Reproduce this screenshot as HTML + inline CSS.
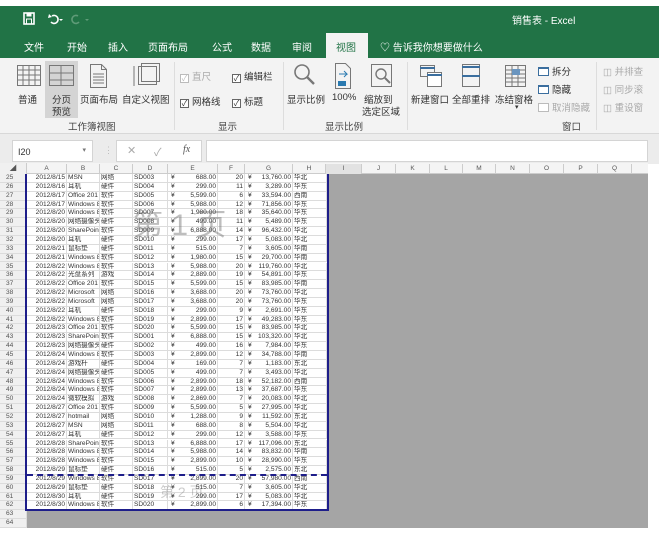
<!DOCTYPE html>
<html><head><meta charset="utf-8"><style>
*{margin:0;padding:0;box-sizing:border-box}
body{width:659px;height:533px;overflow:hidden;background:#fff;font-family:"Liberation Sans","Noto Sans CJK SC",sans-serif;position:relative}
.a{position:absolute;white-space:nowrap}
.t{color:#fff;font-size:10px}
.r{font-size:9.5px;color:#333}
.g{font-size:9.5px;color:#444}
.dis{color:#aaa}
.cb{display:inline-block;width:9px;height:9px;border:1px solid #666;background:#fff;vertical-align:-1px;margin-right:3px;font-size:8px;line-height:7px;text-align:center}
#grid .row{position:absolute;left:0;height:8.85px;width:328px;font-size:6.6px;color:#333;line-height:8.6px}
#grid .row span{position:absolute;top:0;height:8.85px;border-right:1px solid #dcdcdc;border-bottom:1px solid #dcdcdc;overflow:hidden;padding:0 1px}
.rh{left:0;width:27px;background:#f0f0f0;color:#555;text-align:left;padding-left:6px!important}
.ch{position:absolute;top:164px;height:10px;font-size:6.5px;color:#555;text-align:center;line-height:10px;border-right:1px solid #ccc}
</style></head><body>
<div class="a" style="left:0;top:6px;width:659px;height:52px;background:#217346"></div>
<svg class="a" style="left:22px;top:12px" width="80" height="14" viewBox="0 0 80 14">
<rect x="2" y="1" width="10" height="11" fill="none" stroke="#fff" stroke-width="1.6"/><rect x="4.5" y="1" width="5" height="3.5" fill="#fff"/><rect x="4.5" y="7" width="5" height="5" fill="none" stroke="#fff"/>
<path d="M30 4 a4 4 0 1 1 -1 6" fill="none" stroke="#fff" stroke-width="1.6"/><path d="M27 2 l3 3 l-4 1z" fill="#fff"/><path d="M37 7 l2 2 l2 -2" fill="#fff"/>
<path d="M57 10 a4 4 0 1 1 -1 -6" fill="none" stroke="#5f9b78" stroke-width="1.6"/><path d="M63 7 l2 2 l2 -2" fill="#5f9b78"/>
<path d="M81 5 h4 M81 7 l2 3 l2 -3z" stroke="#fff" fill="#fff"/>
</svg>
<div class="a t" style="left:512px;top:12px">销售表 - Excel</div>
<div class="a t" style="left:24px;top:39px">文件</div>
<div class="a t" style="left:67px;top:39px">开始</div>
<div class="a t" style="left:108px;top:39px">插入</div>
<div class="a t" style="left:148px;top:39px">页面布局</div>
<div class="a t" style="left:212px;top:39px">公式</div>
<div class="a t" style="left:251px;top:39px">数据</div>
<div class="a t" style="left:292px;top:39px">审阅</div>
<div class="a" style="left:326px;top:33px;width:42px;height:26px;background:#f3f3f3"></div>
<div class="a" style="left:336px;top:39px;font-size:10px;color:#217346">视图</div>
<div class="a t" style="left:380px;top:39px">♡ 告诉我你想要做什么</div>
<div class="a" style="left:0;top:58px;width:659px;height:76px;background:#f3f3f3;border-bottom:1px solid #d8d8d8"></div>
<div class="a" style="left:45px;top:61px;width:33px;height:57px;background:#d4d4d4"></div>
<svg class="a" style="left:0;top:60px" width="659" height="40">
<g fill="none" stroke="#777" stroke-width="1">
<rect x="17.5" y="5.5" width="23" height="20"/><path d="M17 10h24M17 15h24M17 20h24M23 5v21M29 5v21M35 5v21"/>
<rect x="49.5" y="5.5" width="24" height="20"/><path d="M49 13h25M49 20h25M61 5v21"/>
<path d="M90.5 4.5h11l5 5v18h-16z M101.5 4.5v5h5 M93 14h11M93 17h11M93 20h11M93 23h11"/>
<rect x="138.5" y="6.5" width="18" height="18"/><rect x="141.5" y="3.5" width="18" height="18"/><path d="M134 6v20"/>
<circle cx="302" cy="12" r="7" stroke-width="1.6"/><path d="M307 17l7 7" stroke-width="2.4"/>
<path d="M335.5 3.5h10l5 5v20h-15z"/><path d="M339 14h8l-3-3M347 14l-3 3" stroke="#2a7ab0"/><rect x="338" y="21" width="8" height="5" fill="#2a7ab0" stroke="none"/>
<rect x="371.5" y="4.5" width="20" height="22"/><circle cx="381" cy="14" r="5" stroke-width="1.4"/><path d="M385 18l5 5" stroke-width="2"/>
<rect x="420.5" y="5.5" width="14" height="11"/><rect x="427.5" y="12.5" width="14" height="14" fill="#fff"/><path d="M427 15h15M420 8h15" stroke="#3b6e9e" stroke-width="2"/>
<rect x="462.5" y="4.5" width="17" height="22"/><path d="M462 7h18M462 16h18" stroke="#3b6e9e" stroke-width="2"/>
<rect x="505.5" y="5.5" width="20" height="21"/><path d="M505 10h21M505 14h21M505 18h21M505 22h21M512 5v22M518 5v22"/><rect x="512" y="9" width="8" height="6" fill="#6a95bf" stroke="none"/>
</g></svg>
<div class="a r" style="left:18px;top:92px">普通</div>
<div class="a r" style="left:52px;top:92px">分页</div>
<div class="a r" style="left:52px;top:104px">预览</div>
<div class="a r" style="left:80px;top:92px">页面布局</div>
<div class="a r" style="left:122px;top:92px">自定义视图</div>
<div class="a g" style="left:68px;top:119px">工作簿视图</div>
<div class="a" style="left:174px;top:62px;width:1px;height:68px;background:#ddd"></div>
<div class="a r dis" style="left:180px;top:69px"><span class="cb" style="border-color:#bbb;color:#bbb">✓</span>直尺</div>
<div class="a r" style="left:232px;top:69px"><span class="cb">✓</span>编辑栏</div>
<div class="a r" style="left:180px;top:94px"><span class="cb">✓</span>网格线</div>
<div class="a r" style="left:232px;top:94px"><span class="cb">✓</span>标题</div>
<div class="a g" style="left:218px;top:119px">显示</div>
<div class="a" style="left:283px;top:62px;width:1px;height:68px;background:#ddd"></div>
<div class="a r" style="left:287px;top:92px">显示比例</div>
<div class="a r" style="left:332px;top:92px">100%</div>
<div class="a r" style="left:364px;top:92px">缩放到</div>
<div class="a r" style="left:362px;top:104px">选定区域</div>
<div class="a g" style="left:325px;top:119px">显示比例</div>
<div class="a" style="left:407px;top:62px;width:1px;height:68px;background:#ddd"></div>
<div class="a r" style="left:411px;top:92px">新建窗口</div>
<div class="a r" style="left:452px;top:92px">全部重排</div>
<div class="a r" style="left:495px;top:92px">冻结窗格</div>
<div class="a r" style="left:515px;top:103px;font-size:7px">▾</div>
<div class="a r" style="left:538px;top:64px"><span class="cb" style="width:11px;border-color:#3b6e9e;border-top-width:2px"></span>拆分</div>
<div class="a r" style="left:538px;top:82px"><span class="cb" style="width:11px;border-color:#3b6e9e;border-top-width:2px"></span>隐藏</div>
<div class="a r dis" style="left:538px;top:100px"><span class="cb" style="width:11px;border-color:#bbb"></span>取消隐藏</div>
<div class="a g" style="left:562px;top:119px">窗口</div>
<div class="a" style="left:596px;top:62px;width:1px;height:68px;background:#ddd"></div>
<div class="a r dis" style="left:603px;top:64px">◫ 并排查</div>
<div class="a r dis" style="left:603px;top:82px">◫ 同步滚</div>
<div class="a r dis" style="left:603px;top:100px">◫ 重设窗</div>
<div class="a" style="left:0;top:134px;width:659px;height:30px;background:#ececec"></div>
<div class="a" style="left:12px;top:140px;width:81px;height:22px;background:#fff;border:1px solid #d4d4d4;font-size:9px;color:#333;padding:6px 0 0 5px">I20<span style="position:absolute;right:6px;top:5px;font-size:7px;color:#777">▾</span></div>
<div class="a" style="left:104px;top:145px;font-size:9px;color:#bbb">⋮</div>
<div class="a" style="left:116px;top:140px;width:86px;height:22px;background:#fff;border:1px solid #d4d4d4"></div>
<div class="a" style="left:127px;top:144px;font-size:11px;color:#aaa">✕</div>
<div class="a" style="left:154px;top:144px;font-size:11px;color:#aaa">✓</div>
<div class="a" style="left:183px;top:144px;font-size:10px;color:#555;font-style:italic;font-family:'Liberation Serif',serif">fx</div>
<div class="a" style="left:206px;top:140px;width:442px;height:22px;background:#fff;border:1px solid #d4d4d4"></div>
<div class="a" style="left:0;top:163px;width:648px;height:365px;background:#a5a5a5"></div>
<div class="a" style="left:0;top:163px;width:648px;height:11px;background:#f4f4f4;border-bottom:1px solid #ccc"></div>
<div class="a" style="left:0;top:163px;width:27px;height:365px;background:#f0f0f0;border-right:1px solid #ccc"></div>
<div class="ch" style="left:0;width:27px">◢</div>
<div class="ch" style="left:27px;width:40px">A</div><div class="ch" style="left:67px;width:33px">B</div><div class="ch" style="left:100px;width:33px">C</div><div class="ch" style="left:133px;width:35px">D</div><div class="ch" style="left:168px;width:50px">E</div><div class="ch" style="left:218px;width:27px">F</div><div class="ch" style="left:245px;width:48px">G</div><div class="ch" style="left:293px;width:33px">H</div><div class="ch" style="left:326px;width:36px;background:#e2e2e2">I</div><div class="ch" style="left:362px;width:34px">J</div><div class="ch" style="left:396px;width:34px">K</div><div class="ch" style="left:430px;width:33px">L</div><div class="ch" style="left:463px;width:33px">M</div><div class="ch" style="left:496px;width:34px">N</div><div class="ch" style="left:530px;width:34px">O</div><div class="ch" style="left:564px;width:34px">P</div><div class="ch" style="left:598px;width:34px">Q</div>
<div class="a" style="left:27px;top:174px;width:300px;height:336px;background:#fff"></div>
<div id="grid" class="a" style="left:0;top:174px;width:330px;height:360px"></div>
<div class="a" style="left:25px;top:174px;width:304px;height:337px;border:2px solid #1e1e8a;border-top:none"></div>
<div class="a" style="left:27px;top:474px;width:300px;border-top:2px dashed #1e1e8a"></div>
<div class="a" style="left:133px;top:200px;font-size:30px;color:rgba(110,110,110,.45)">第 1 页</div>
<div class="a" style="left:160px;top:482px;font-size:14px;color:rgba(110,110,110,.35)">第 2 页</div>
<script>
var d=[
["2012/8/15","MSN","网络","SD003","688.00","20","13,760.00","华北"],
["2012/8/16","耳机","硬件","SD004","299.00","11","3,289.00","华东"],
["2012/8/17","Office 201","软件","SD005","5,599.00","6","33,594.00","西南"],
["2012/8/17","Windows 8","软件","SD006","5,988.00","12","71,856.00","华东"],
["2012/8/20","Windows 8","软件","SD007","1,980.00","18","35,640.00","华东"],
["2012/8/20","网络摄像头","硬件","SD008","499.00","11","5,489.00","华东"],
["2012/8/20","SharePoin","软件","SD009","6,888.00","14","96,432.00","华北"],
["2012/8/20","耳机","硬件","SD010","299.00","17","5,083.00","华北"],
["2012/8/21","鼠标垫","硬件","SD011","515.00","7","3,605.00","华南"],
["2012/8/21","Windows 8","软件","SD012","1,980.00","15","29,700.00","华南"],
["2012/8/22","Windows 8","软件","SD013","5,988.00","20","119,760.00","华北"],
["2012/8/22","光盘系列","游戏","SD014","2,889.00","19","54,891.00","华东"],
["2012/8/22","Office 201","软件","SD015","5,599.00","15","83,985.00","华南"],
["2012/8/22","Microsoft","网络","SD016","3,688.00","20","73,760.00","华北"],
["2012/8/22","Microsoft","网络","SD017","3,688.00","20","73,760.00","华东"],
["2012/8/22","耳机","硬件","SD018","299.00","9","2,691.00","华东"],
["2012/8/22","Windows 8","软件","SD019","2,899.00","17","49,283.00","华东"],
["2012/8/23","Office 201","软件","SD020","5,599.00","15","83,985.00","华北"],
["2012/8/23","SharePoin","软件","SD001","6,888.00","15","103,320.00","华北"],
["2012/8/23","网络摄像头","硬件","SD002","499.00","16","7,984.00","华东"],
["2012/8/24","Windows 8","软件","SD003","2,899.00","12","34,788.00","华南"],
["2012/8/24","游戏杆","硬件","SD004","169.00","7","1,183.00","东北"],
["2012/8/24","网络摄像头","硬件","SD005","499.00","7","3,493.00","华北"],
["2012/8/24","Windows 8","软件","SD006","2,899.00","18","52,182.00","西南"],
["2012/8/24","Windows 8","软件","SD007","2,899.00","13","37,687.00","华东"],
["2012/8/24","微软模拟","游戏","SD008","2,869.00","7","20,083.00","华北"],
["2012/8/27","Office 201","软件","SD009","5,599.00","5","27,995.00","华北"],
["2012/8/27","hotmail","网络","SD010","1,288.00","9","11,592.00","东北"],
["2012/8/27","MSN","网络","SD011","688.00","8","5,504.00","华北"],
["2012/8/27","耳机","硬件","SD012","299.00","12","3,588.00","华东"],
["2012/8/28","SharePoin","软件","SD013","6,888.00","17","117,096.00","东北"],
["2012/8/28","Windows 8","软件","SD014","5,988.00","14","83,832.00","华南"],
["2012/8/28","Windows 8","软件","SD015","2,899.00","10","28,990.00","华东"],
["2012/8/29","鼠标垫","硬件","SD016","515.00","5","2,575.00","东北"],
["2012/8/29","Windows 8","软件","SD017","2,899.00","20","57,980.00","西南"],
["2012/8/29","鼠标垫","硬件","SD018","515.00","7","3,605.00","华北"],
["2012/8/30","耳机","硬件","SD019","299.00","17","5,083.00","华北"],
["2012/8/30","Windows 8","软件","SD020","2,899.00","6","17,394.00","华东"]];
var h="";
for(var i=0;i<40;i++){var y=(i*8.85).toFixed(2);var n=25+i;
h+='<div class="row" style="top:'+y+'px"><span class="rh">'+n+'</span>';
if(i<d.length){var r=d[i];
h+='<span style="left:27px;width:40px;text-align:right">'+r[0]+'</span><span style="left:67px;width:33px">'+r[1]+'</span><span style="left:100px;width:33px">'+r[2]+'</span><span style="left:133px;width:35px">'+r[3]+'</span><span style="left:168px;width:50px;text-align:right"><b style="font-weight:normal;float:left;padding-left:2px">¥</b>'+r[4]+'</span><span style="left:218px;width:27px;text-align:right">'+r[5]+'</span><span style="left:245px;width:48px;text-align:right"><b style="font-weight:normal;float:left;padding-left:2px">¥</b>'+r[6]+'</span><span style="left:293px;width:34px">'+r[7]+'</span>';}
h+='</div>';}
document.getElementById("grid").innerHTML=h;
</script>
</body></html>
